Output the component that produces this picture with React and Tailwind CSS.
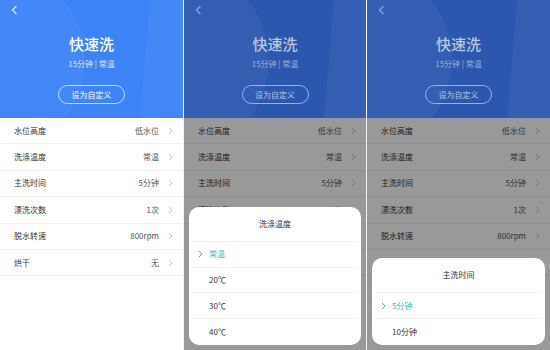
import React from 'react';

const FONT = { fontFamily: '"Noto Sans CJK SC", "Noto Sans", sans-serif' };

const ROWS = [
  ['水位高度', '低水位'],
  ['洗涤温度', '常温'],
  ['主洗时间', '5分钟'],
  ['漂洗次数', '1次'],
  ['脱水转速', '800rpm'],
  ['烘干', '无'],
];

function Chevron({ className = '' }) {
  return (
    <svg width="5" height="8" viewBox="0 0 5 8" className={className}>
      <polyline points="1,1 4,4 1,7" fill="none" stroke="currentColor" strokeWidth="1" />
    </svg>
  );
}

function Header({ dim }) {
  return (
    <div className={'relative h-[118px] overflow-hidden ' + (dim ? 'bg-[#2b58ae]' : 'bg-[#3d83f6]')}>
      {/* soft background shapes */}
      <svg className="absolute inset-0" width="183" height="118" viewBox="0 0 183 118">
        <circle cx="-10" cy="60" r="95" fill="#ffffff" fillOpacity="0.04" />
        <polygon points="150,0 183,0 183,118 140,118" fill="#ffffff" fillOpacity="0.04" />
      </svg>
      <svg className="absolute left-[11px] top-[5px]" width="7" height="10" viewBox="0 0 7 10">
        <polyline
          points="5.5,1 1.5,5 5.5,9"
          fill="none"
          stroke={dim ? '#8ea6d4' : '#dbe7ff'}
          strokeWidth="1.3"
        />
      </svg>
      <div className={'relative flex flex-col items-center pt-[33px] ' + (dim ? 'text-[#b9c6de]' : 'text-white')}>
        <div className="text-[15px] leading-[22px] font-medium">快速洗</div>
        <div className="mt-[3px] text-[8px] leading-[12px] opacity-80">15分钟 | 常温</div>
        <div
          className={
            'mt-[15px] flex h-[19px] w-[67px] items-center justify-center rounded-full border text-[8px] ' +
            (dim ? 'border-[#9fb2d8]' : 'border-white/70')
          }
        >
          设为自定义
        </div>
      </div>
    </div>
  );
}

function List() {
  return (
    <div className="bg-white">
      {ROWS.map(([label, value]) => (
        <div
          key={label}
          className="flex h-[26.4px] items-center border-b border-[#f0f0f0] pl-[14px] pr-[10px] text-[8px]"
        >
          <span className="text-[#333]">{label}</span>
          <span className="ml-auto text-[#555]">{value}</span>
          <Chevron className="ml-[9px] text-[#c8c8c8]" />
        </div>
      ))}
    </div>
  );
}

function Sheet({ title, options }) {
  return (
    <div className="absolute bottom-[5px] left-[5px] right-[5px] rounded-[10px] bg-white px-[3px]">
      <div className="flex h-[35px] items-center justify-center border-b border-[#f2f2f2] text-[8px] text-[#333]">
        {title}
      </div>
      {options.map((o, i) => (
        <div
          key={o}
          className={
            'flex h-[25.8px] items-center text-[8px] ' +
            (i < options.length - 1 ? 'border-b border-[#f2f2f2] ' : '') +
            (i === 0 ? 'text-[#3fb7b3]' : 'text-[#333]')
          }
        >
          <span className="flex w-[17px] justify-center">
            {i === 0 && <Chevron className="text-[#3fb7b3]" />}
          </span>
          <span>{o}</span>
        </div>
      ))}
    </div>
  );
}

function Panel({ sheet }) {
  return (
    <div className="relative h-[350px] overflow-hidden bg-white">
      <Header dim={!!sheet} />
      <List />
      {sheet && (
        <>
          <div className="absolute inset-x-0 top-[118px] bottom-0 bg-black/40" />
          <Sheet {...sheet} />
        </>
      )}
    </div>
  );
}

export default function App() {
  return (
    <div className="grid h-[350px] w-[550px] grid-cols-[183px_182px_183px] gap-x-px bg-[#f2f2f2]" style={FONT}>
      <Panel />
      <Panel sheet={{ title: '洗涤温度', options: ['常温', '20℃', '30℃', '40℃'] }} />
      <Panel sheet={{ title: '主洗时间', options: ['5分钟', '10分钟'] }} />
    </div>
  );
}
